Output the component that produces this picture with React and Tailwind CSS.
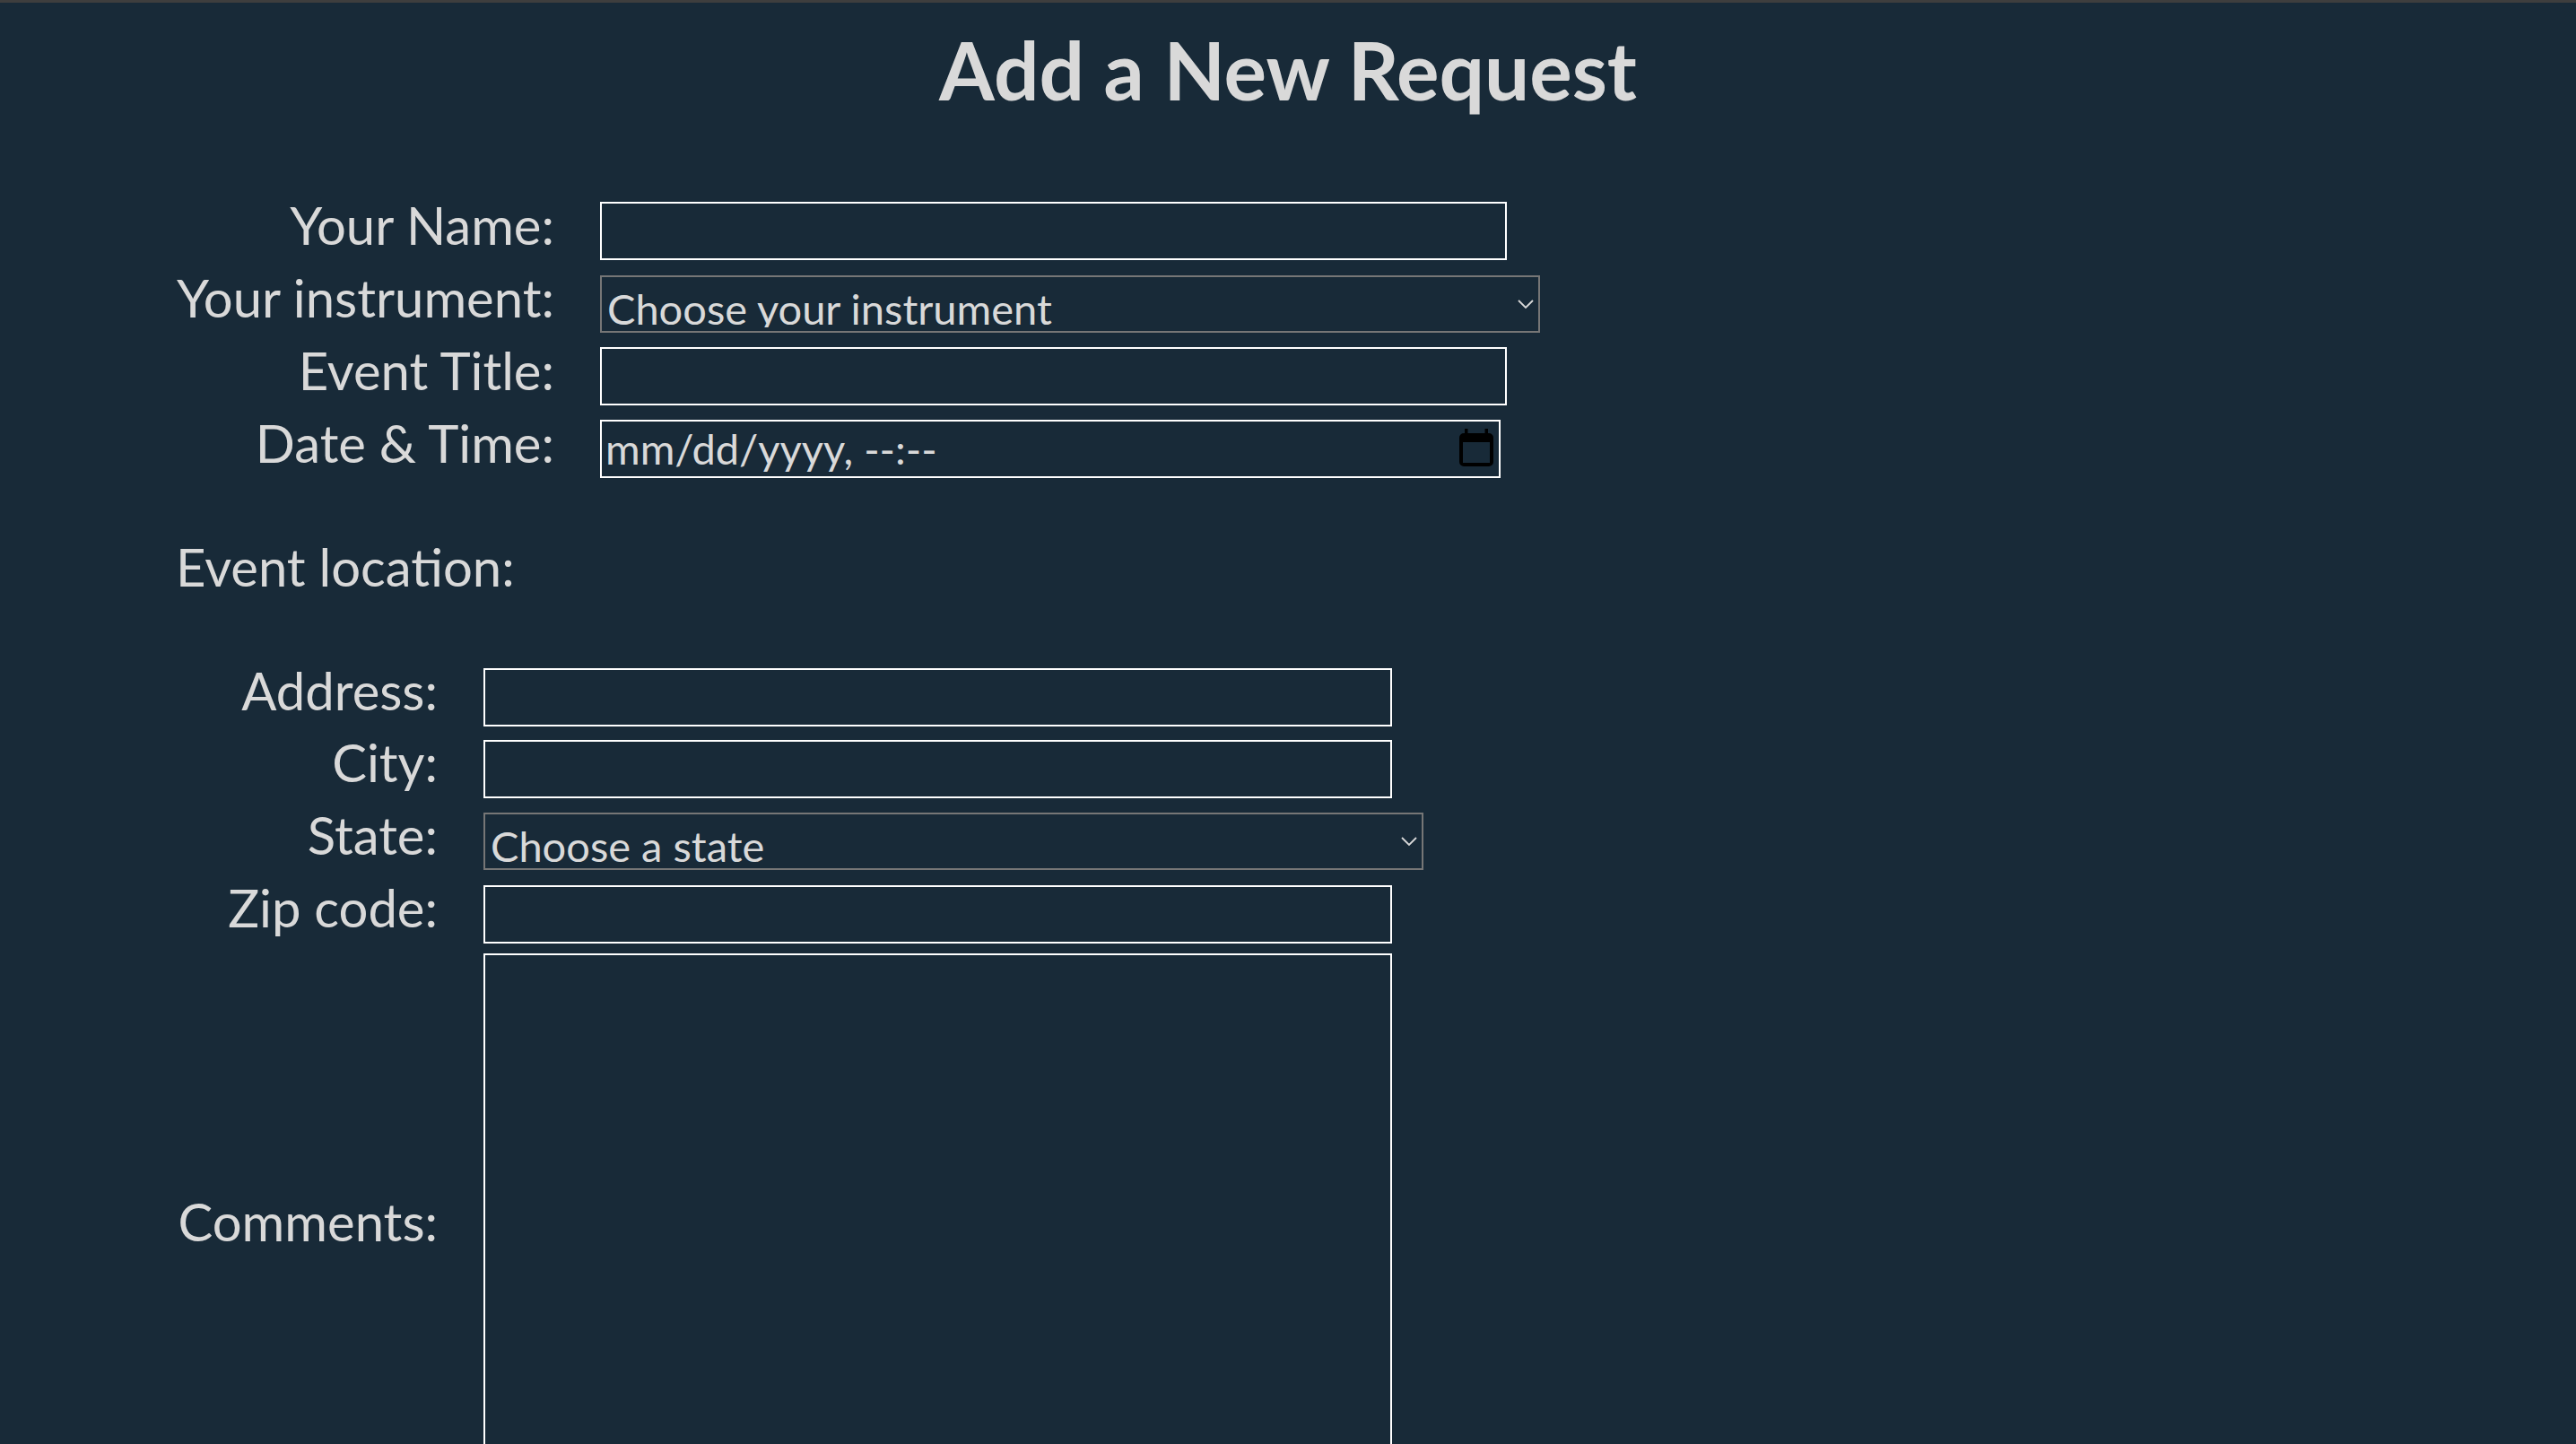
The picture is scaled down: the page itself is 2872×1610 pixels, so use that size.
import React from "react";

const Chevron = () => (
  <svg
    className="pointer-events-none absolute right-[7px] top-1/2 -translate-y-1/2"
    width="18"
    height="11"
    viewBox="0 0 18 11"
    fill="none"
  >
    <path d="M1 1.5 L9 9.5 L17 1.5" stroke="#d9d9d9" strokeWidth="1.8" />
  </svg>
);

const CalendarIcon = () => (
  <svg
    className="pointer-events-none absolute right-[8px] top-[10px]"
    width="38"
    height="42"
    viewBox="0 0 38 42"
  >
    <rect x="6" y="0" width="3.5" height="7" fill="#000" />
    <rect x="28.5" y="0" width="3.5" height="7" fill="#000" />
    <path
      fillRule="evenodd"
      fill="#000"
      d="M5 5 H33 A5 5 0 0 1 38 10 V37 A5 5 0 0 1 33 42 H5 A5 5 0 0 1 0 37 V10 A5 5 0 0 1 5 5 Z M4 15 H34 V38 H4 Z"
    />
  </svg>
);

const TextField = ({ w = "w-[1011px]" }) => (
  <input
    type="text"
    className={`${w} h-[65px] shrink-0 border-2 border-white bg-transparent px-1 text-[47px] text-[#d9d9d9] outline-none`}
  />
);

const SelectField = ({ placeholder }) => (
  <div className="relative w-[1048px] shrink-0">
    <select
      defaultValue=""
      className="h-[64px] w-full appearance-none border-2 border-[#767676] bg-transparent pt-0 pb-[4px] pl-[6px] text-[47px] leading-normal text-[#d9d9d9] outline-none"
    >
      <option value="" disabled>
        {placeholder}
      </option>
    </select>
    <Chevron />
  </div>
);

const Row = ({ label, labelWidth, children, className = "h-[65px]" }) => (
  <div className={`flex items-center ${className}`}>
    <label
      className={`${labelWidth} shrink-0 whitespace-nowrap pb-[14px] pr-[51px] text-right text-[58px] leading-none`}
    >
      {label}
    </label>
    {children}
  </div>
);

export default function App() {
  const top = "w-[473px]";
  const loc = "w-[343px]";

  return (
    <div className="min-h-screen border-t-[3px] border-[#3e3e3e] bg-[#182a38] font-['Lato','Noto_Sans',sans-serif] text-[#d9d9d9]">
      <h1 className="pt-[30px] text-center text-[89px] font-bold leading-none">
        Add a New Request
      </h1>

      <form className="pl-[196px]">
        <div className="mt-[103px] flex flex-col gap-[16px]">
          <Row label="Your Name:" labelWidth={top}>
            <TextField />
          </Row>
          <Row label="Your instrument:" labelWidth={top}>
            <SelectField placeholder="Choose your instrument" />
          </Row>
          <Row label="Event Title:" labelWidth={top}>
            <TextField />
          </Row>
          <Row label="Date & Time:" labelWidth={top}>
            <div className="relative shrink-0">
              <input
                type="text"
                placeholder="mm/dd/yyyy, --:--"
                className="h-[65px] w-[1004px] border-2 border-white bg-transparent pl-[4px] text-[47px] text-[#d9d9d9] outline-none placeholder:text-[#d9d9d9]"
              />
              <CalendarIcon />
            </div>
          </Row>
        </div>

        <p className="mt-[64px] text-[58px] leading-[1.2]">Event location:</p>

        <div className="mt-[78px] flex flex-col">
          <Row label="Address:" labelWidth={loc}>
            <TextField w="w-[1013px]" />
          </Row>
          <Row label="City:" labelWidth={loc} className="mt-[15px] h-[65px]">
            <TextField w="w-[1013px]" />
          </Row>
          <Row label="State:" labelWidth={loc} className="mt-[16px] h-[65px]">
            <SelectField placeholder="Choose a state" />
          </Row>
          <Row label="Zip code:" labelWidth={loc} className="mt-[16px] h-[65px]">
            <TextField w="w-[1013px]" />
          </Row>
          <Row label="Comments:" labelWidth={loc} className="mt-[11px]">
            <textarea className="h-[613px] w-[1013px] shrink-0 resize-none border-2 border-white bg-transparent text-[47px] outline-none" />
          </Row>
        </div>
      </form>
    </div>
  );
}
